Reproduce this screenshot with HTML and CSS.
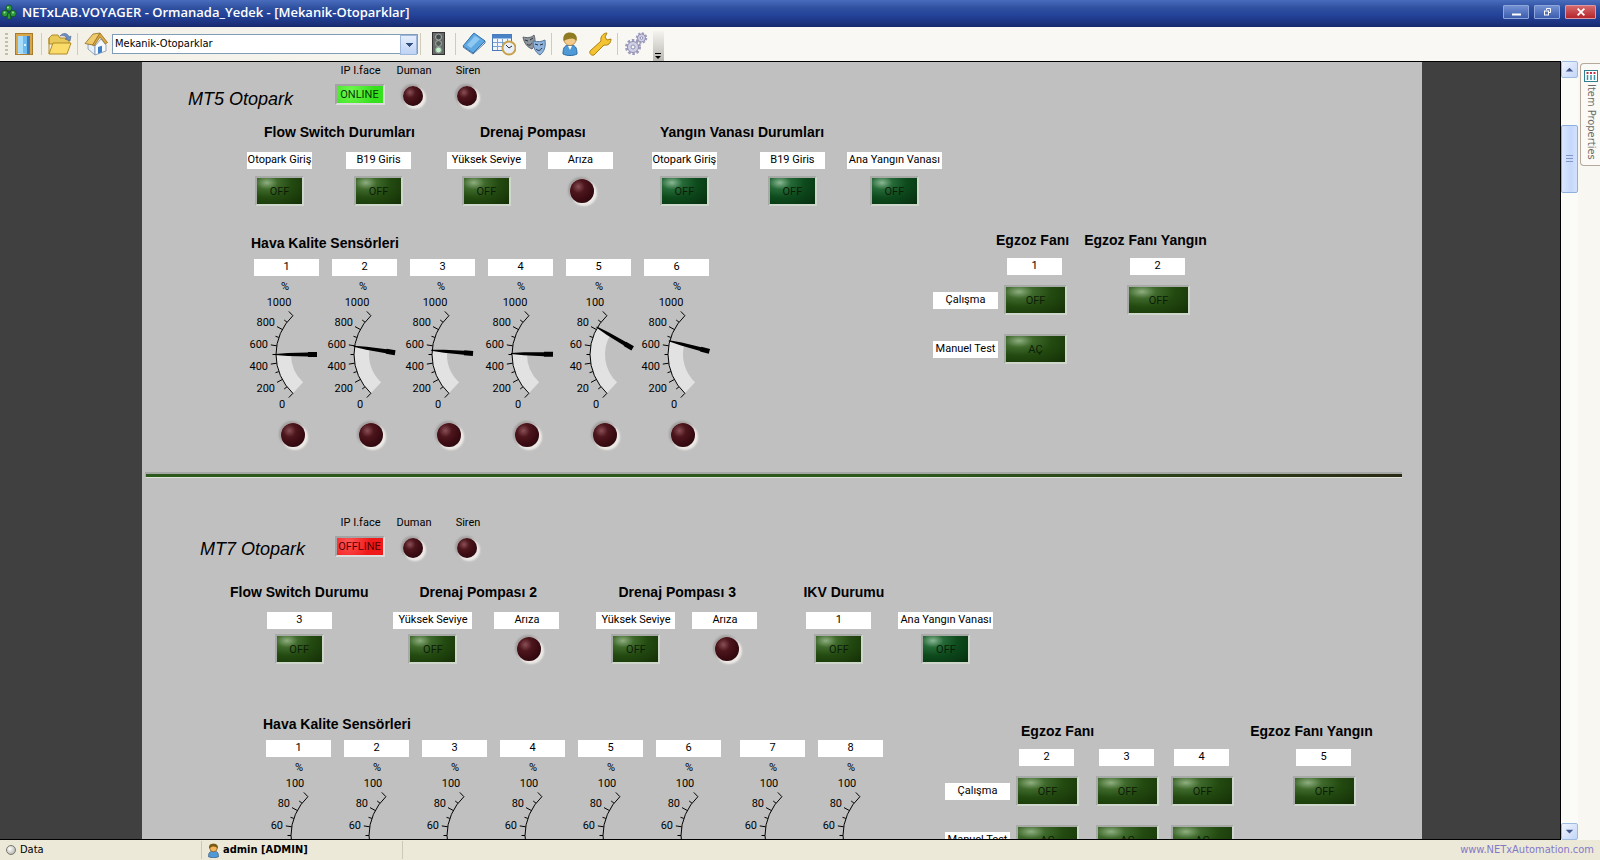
FILE: index.html
```
<!DOCTYPE html>
<html lang="tr">
<head>
<meta charset="utf-8">
<title>NETxLAB.VOYAGER - Ormanada_Yedek - [Mekanik-Otoparklar]</title>
<link rel="stylesheet" href="styles.css">
</head>
<body>
<svg class="defs" aria-hidden="true">
  <symbol id="dial" viewBox="0 0 65 136" overflow="visible">
    <path class="dial-line" d="M38.9 39.7A53 53 0 0 0 38.9 117.3M38.9 39.7L34.8 35.4M33 46.2L30.2 44M28.3 53.5L23 50.6M24.8 61.4L21.5 60.3M22.7 69.8L16.8 68.9M22 78.5H18.5M22.7 87.2L16.8 88.1M24.8 95.6L21.5 96.7M28.3 103.5L23 106.4M33 110.8L30.2 113M38.9 117.3L34.8 121.6"/>
  </symbol>
  <symbol id="needle" viewBox="0 0 65 136" overflow="visible">
    <path d="M21 78L34 77L54 76.5V76H63V81H54V80.5L34 80L21 79Z"/>
  </symbol>
</svg>

<header class="titlebar">
  <svg class="app-icon" viewBox="0 0 16 16"><g fill="#2f9a3c" stroke="#0b4a1a" stroke-width=".7"><circle cx="8" cy="4" r="3"/><circle cx="4" cy="9.500" r="3.200"/><circle cx="12" cy="9.500" r="3.200"/><path d="M7 9h2l1 6H6z"/></g><circle cx="7" cy="3.500" r="1" fill="#9be59b"/><circle cx="3.500" cy="8.500" r="1" fill="#9be59b"/><circle cx="12" cy="8.500" r="1" fill="#9be59b"/></svg>
  <h1 class="title">NETxLAB.VOYAGER - Ormanada_Yedek - [Mekanik-Otoparklar]</h1>
  <div class="window-buttons">
    <button class="winbtn" aria-label="Minimize"><svg viewBox="0 0 24 12"><path d="M8 8.500h9" stroke="#fff" stroke-width="2"/></svg></button>
    <button class="winbtn" aria-label="Restore"><svg viewBox="0 0 24 12"><path d="M11.500 4V2.500h4v4H14" fill="none" stroke="#fff"/><rect x="9.500" y="5" width="4" height="4" fill="none" stroke="#fff"/></svg></button>
    <button class="winbtn close" aria-label="Close"><svg viewBox="0 0 30 12"><path d="M12 2.500l7 7M19 2.500l-7 7" stroke="#fff" stroke-width="1.800"/></svg></button>
  </div>
</header>

<nav class="toolbar" aria-label="Toolbar">
  <span class="grip"></span>
  <button class="tool" aria-label="Exit"><svg viewBox="0 0 24 24"><rect x="3.500" y="1.500" width="17" height="21" fill="#d9a64a" stroke="#a87a2c"/><rect x="6" y="4" width="12" height="18" fill="#e9f6ff"/><path d="M6 4h9v18l-9-1z" fill="#6cbcf0"/><path d="M6 4h5v17l-5-.5z" fill="#a9dcfa"/><path d="M15 4h3v18h-3z" fill="#3a78c0"/><circle cx="13" cy="13" r="1" fill="#fff"/></svg></button>
  <span class="sep"></span>
  <button class="tool" aria-label="Open"><svg viewBox="0 0 24 24"><path d="M1 6l3-3h6l2 3h9v6H1z" fill="#e8c95a" stroke="#b08b28"/><path d="M1 6v16" stroke="#b08b28"/><path d="M1 22l4-11h18l-4 11z" fill="#fbdc6a" stroke="#b08b28"/><path d="M12 4c3-4 8-3 9 1l2-1-1 5-5-2 2-1c-1-2-4-3-7-2z" fill="#6d8fc0" stroke="#4a6592" stroke-width=".6"/></svg></button>
  <span class="sep"></span>
  <button class="tool home" aria-label="Home"><svg viewBox="0 0 24 24"><path d="M4 12l7 10V9z" fill="#dfeaf6" stroke="#7d93ad" stroke-width=".8"/><path d="M4 12v5l7 6V13z" fill="#e6effa" stroke="#7d93ad" stroke-width=".8"/><path d="M11 14l6-7 5 6v6l-11 4z" fill="#f6faff" stroke="#7d93ad" stroke-width=".8"/><path d="M14 15l4-1.300v6.500l-4 1.500z" fill="#3d7fc4"/><path d="M1 11.500L9 2l7-1-7 12z" fill="#efcb6c" stroke="#946f24" stroke-width=".8"/><path d="M16 1l7.500 9.500-2 1.500-5.500-7-6 9-1.500-1z" fill="#dba844" stroke="#946f24" stroke-width=".8"/></svg></button>
  <label class="combo"><select aria-label="Page"><option>Mekanik-Otoparklar</option></select></label>
  <span class="sep tight"></span>
  <button class="tool" aria-label="Status"><svg viewBox="0 0 24 24"><rect x="6.500" y=".5" width="12" height="22" fill="#666a68" stroke="#333"/><circle cx="12.500" cy="5" r="3" fill="#434b48" stroke="#a9b0ac"/><circle cx="12.500" cy="11.500" r="3" fill="#535b57" stroke="#a9b0ac"/><circle cx="12.500" cy="18" r="3" fill="#bff0c8" stroke="#8b938f"/></svg></button>
  <span class="sep"></span>
  <button class="tool" aria-label="Book"><svg viewBox="0 0 24 24"><path d="M1 15l10 7 12-11v-2L11 2z" fill="#e8eef5" stroke="#4c79a8"/><path d="M1 14L12 1l11 8-12 12z" fill="#5fa9e2" stroke="#3a74ad"/><path d="M5 13l8-9 5 3-9 9z" fill="#8fc8f1"/></svg></button>
  <button class="tool gap" aria-label="Calendar"><svg viewBox="0 0 24 24"><rect x=".5" y="2.500" width="19" height="16" fill="#f2f7fd" stroke="#4a78b8"/><path d="M.5 2.500h19v4H.5z" fill="#4a82c8"/><path d="M1 10.500h18M1 14.500h18M5.500 7v11M10.500 7v11M15.500 7v11" stroke="#7ba2d2"/><circle cx="17" cy="16" r="6.500" fill="#e8eefb" stroke="#c7a24a" stroke-width="2"/><path d="M14 13l3 3 3-2" fill="none" stroke="#333"/></svg></button>
  <button class="tool gap" aria-label="Scenes"><svg viewBox="0 0 24 24"><path d="M1 5c4 1 8 1 11-2 2 6 1 11-2 14-5-2-8-6-9-12z" fill="#8d949c" stroke="#5f666e"/><path d="M3 8l3 1M8 8l3-2M5 12c2 2 4 1 5-1" stroke="#2f353b" fill="none"/><path d="M11 9c5 1 8 1 12-1 1 7-1 12-5 15-5-3-7-8-7-14z" fill="#8fb3dc" stroke="#54779f"/><path d="M13 12l3 1M18 13l3-1M14 17c2 2 4 2 6-1" stroke="#234" fill="none"/></svg></button>
  <span class="sep"></span>
  <button class="tool" aria-label="User"><svg viewBox="0 0 24 24"><path d="M5 22c0-7 2-9 7-9s7 2 7 9c-4 2-10 2-14 0z" fill="#4e9ad6" stroke="#2b6ba5"/><path d="M10 14l2 4 2-4z" fill="#fff"/><circle cx="12" cy="7.500" r="6" fill="#f3c98c" stroke="#a9763a" stroke-width=".7"/><path d="M5.500 9c-1-6 2-8.500 6.500-8.500S20 3.500 18.500 9c-1-1-2-2-4-2.500-4 0-6 1-9 2.500z" fill="#8f7c22"/></svg></button>
  <button class="tool gap" aria-label="Settings"><svg viewBox="0 0 24 24"><path d="M2 19L13 9c-1-4 2-8 6-8l-2 4 2 3 4-1c0 4-3 7-7 6L6 23c-3 1-5-2-4-4z" fill="#f4c331" stroke="#ad8114"/></svg></button>
  <span class="sep"></span>
  <button class="tool" aria-label="Services"><svg viewBox="0 0 24 24"><circle cx="9" cy="15" r="6.500" fill="none" stroke="#9c9bbb" stroke-width="3" stroke-dasharray="2.400 1.700"/><circle cx="9" cy="15" r="5.500" fill="#cfcfe6" stroke="#9290b2"/><circle cx="9" cy="15" r="2" fill="#f7f6f1" stroke="#9290b2"/><circle cx="17.500" cy="6" r="4.500" fill="none" stroke="#9c9bbb" stroke-width="2.500" stroke-dasharray="2 1.500"/><circle cx="17.500" cy="6" r="4" fill="#cfcfe6" stroke="#9290b2"/><circle cx="17.500" cy="6" r="1.300" fill="#f7f6f1" stroke="#9290b2"/></svg></button>
  <button class="overflow" aria-label="More"><svg viewBox="0 0 10 10"><path d="M2 2.500h6" stroke="#000"/><path d="M2 5h6L5 8z"/></svg></button>
</nav>

<div class="workspace">
  <main class="canvas">
    <div class="sheet">

      <section class="area mt5">
        <header class="area-head">
          <h2 class="area-title">MT5 Otopark</h2>
          <div class="states">
            <span class="cap">IP I.face</span><span class="cap">Duman</span><span class="cap">Siren</span>
            <span class="state on">ONLINE</span><span class="led small"></span><span class="led small"></span>
          </div>
        </header>

        <div class="groups">
          <section class="group flow">
            <h3>Flow Switch Durumları</h3>
            <div class="fields">
              <div class="field"><span class="tag">Otopark Giriş</span><span class="lamp">OFF</span></div>
              <div class="field"><span class="tag">B19 Giris</span><span class="lamp">OFF</span></div>
            </div>
          </section>
          <section class="group drain">
            <h3>Drenaj Pompası</h3>
            <div class="fields">
              <div class="field"><span class="tag wide">Yüksek Seviye</span><span class="lamp">OFF</span></div>
              <div class="field"><span class="tag">Arıza</span><span class="led"></span></div>
            </div>
          </section>
          <section class="group valves">
            <h3>Yangın Vanası Durumları</h3>
            <div class="fields">
              <div class="field"><span class="tag">Otopark Giriş</span><span class="lamp cool">OFF</span></div>
              <div class="field second"><span class="tag">B19 Giris</span><span class="lamp cool">OFF</span></div>
              <div class="field"><span class="tag widest">Ana Yangın Vanası</span><span class="lamp cool">OFF</span></div>
            </div>
          </section>
        </div>

        <div class="lower">
          <section class="sensors">
            <h3>Hava Kalite Sensörleri</h3>
            <div class="gauges">
              <div class="sensor"><span class="tag">1</span>
                <svg class="gauge" viewBox="0 0 65 136"><path class="band" pathLength="94" stroke-dasharray="47 94" d="M44 111.800A45.500 45.500 0 0 1 44 45.200"/><use href="#dial"/><use href="#needle"/><text class="mid" x="31" y="14">%</text><text class="mid" x="25" y="30">1000</text><text x="21" y="50">800</text><text x="14" y="72">600</text><text x="14" y="94">400</text><text x="21" y="116">200</text><text class="mid" x="28" y="132">0</text></svg>
                <span class="led"></span></div>
              <div class="sensor"><span class="tag">2</span>
                <svg class="gauge" viewBox="0 0 65 136"><path class="band" pathLength="94" stroke-dasharray="55.700 94" d="M44 111.800A45.500 45.500 0 0 1 44 45.200"/><use href="#dial"/><use href="#needle" transform="rotate(8.700 75 78.500)"/><text class="mid" x="31" y="14">%</text><text class="mid" x="25" y="30">1000</text><text x="21" y="50">800</text><text x="14" y="72">600</text><text x="14" y="94">400</text><text x="21" y="116">200</text><text class="mid" x="28" y="132">0</text></svg>
                <span class="led"></span></div>
              <div class="sensor"><span class="tag">3</span>
                <svg class="gauge" viewBox="0 0 65 136"><path class="band" pathLength="94" stroke-dasharray="51.500 94" d="M44 111.800A45.500 45.500 0 0 1 44 45.200"/><use href="#dial"/><use href="#needle" transform="rotate(4.500 75 78.500)"/><text class="mid" x="31" y="14">%</text><text class="mid" x="25" y="30">1000</text><text x="21" y="50">800</text><text x="14" y="72">600</text><text x="14" y="94">400</text><text x="21" y="116">200</text><text class="mid" x="28" y="132">0</text></svg>
                <span class="led"></span></div>
              <div class="sensor"><span class="tag">4</span>
                <svg class="gauge" viewBox="0 0 65 136"><path class="band" pathLength="94" stroke-dasharray="48 94" d="M44 111.800A45.500 45.500 0 0 1 44 45.200"/><use href="#dial"/><use href="#needle" transform="rotate(1 75 78.500)"/><text class="mid" x="31" y="14">%</text><text class="mid" x="25" y="30">1000</text><text x="21" y="50">800</text><text x="14" y="72">600</text><text x="14" y="94">400</text><text x="21" y="116">200</text><text class="mid" x="28" y="132">0</text></svg>
                <span class="led"></span></div>
              <div class="sensor"><span class="tag">5</span>
                <svg class="gauge" viewBox="0 0 65 136"><path class="band" pathLength="94" stroke-dasharray="77.600 94" d="M44 111.800A45.500 45.500 0 0 1 44 45.200"/><use href="#dial"/><use href="#needle" transform="rotate(30.600 75 78.500)"/><text class="mid" x="31" y="14">%</text><text class="mid" x="27" y="30">100</text><text x="21" y="50">80</text><text x="14" y="72">60</text><text x="14" y="94">40</text><text x="21" y="116">20</text><text class="mid" x="28" y="132">0</text></svg>
                <span class="led"></span></div>
              <div class="sensor"><span class="tag">6</span>
                <svg class="gauge" viewBox="0 0 65 136"><path class="band" pathLength="94" stroke-dasharray="61.800 94" d="M44 111.800A45.500 45.500 0 0 1 44 45.200"/><use href="#dial"/><use href="#needle" transform="rotate(14.800 75 78.500)"/><text class="mid" x="31" y="14">%</text><text class="mid" x="25" y="30">1000</text><text x="21" y="50">800</text><text x="14" y="72">600</text><text x="14" y="94">400</text><text x="21" y="116">200</text><text class="mid" x="28" y="132">0</text></svg>
                <span class="led"></span></div>
            </div>
          </section>
          <section class="fans">
            <div class="fan-heads"><h3>Egzoz Fanı</h3><h3>Egzoz Fanı Yangın</h3></div>
            <div class="fan-grid">
              <span></span><span class="tag short">1</span><span class="tag short">2</span>
              <span class="tag">Çalışma</span><span class="lamp big">OFF</span><span class="lamp big">OFF</span>
              <span class="tag">Manuel Test</span><button class="lamp big">AÇ</button><span></span>
            </div>
          </section>
        </div>
      </section>

      <hr class="divider">

      <section class="area mt7">
        <header class="area-head">
          <h2 class="area-title">MT7 Otopark</h2>
          <div class="states">
            <span class="cap">IP I.face</span><span class="cap">Duman</span><span class="cap">Siren</span>
            <span class="state off">OFFLINE</span><span class="led small"></span><span class="led small"></span>
          </div>
        </header>

        <div class="groups">
          <section class="group flow">
            <h3>Flow Switch Durumu</h3>
            <div class="fields">
              <div class="field"><span class="tag">3</span><span class="lamp">OFF</span></div>
            </div>
          </section>
          <section class="group drain">
            <h3>Drenaj Pompası 2</h3>
            <div class="fields">
              <div class="field"><span class="tag wide">Yüksek Seviye</span><span class="lamp">OFF</span></div>
              <div class="field"><span class="tag">Arıza</span><span class="led"></span></div>
            </div>
          </section>
          <section class="group drain-b">
            <h3>Drenaj Pompası 3</h3>
            <div class="fields">
              <div class="field"><span class="tag wide">Yüksek Seviye</span><span class="lamp">OFF</span></div>
              <div class="field"><span class="tag">Arıza</span><span class="led"></span></div>
            </div>
          </section>
          <section class="group ikv">
            <h3>IKV Durumu</h3>
            <div class="fields">
              <div class="field"><span class="tag">1</span><span class="lamp">OFF</span></div>
              <div class="field"><span class="tag widest">Ana Yangın Vanası</span><span class="lamp cool">OFF</span></div>
            </div>
          </section>
        </div>

        <div class="lower">
          <section class="sensors">
            <h3>Hava Kalite Sensörleri</h3>
            <div class="gauges">
              <div class="sensor"><span class="tag">1</span><svg class="gauge" viewBox="0 0 65 136"><use href="#dial"/><text class="mid" x="30" y="14">%</text><text class="mid" x="26" y="30">100</text><text x="21" y="50">80</text><text x="14" y="72">60</text></svg></div>
              <div class="sensor"><span class="tag">2</span><svg class="gauge" viewBox="0 0 65 136"><use href="#dial"/><text class="mid" x="30" y="14">%</text><text class="mid" x="26" y="30">100</text><text x="21" y="50">80</text><text x="14" y="72">60</text></svg></div>
              <div class="sensor"><span class="tag">3</span><svg class="gauge" viewBox="0 0 65 136"><use href="#dial"/><text class="mid" x="30" y="14">%</text><text class="mid" x="26" y="30">100</text><text x="21" y="50">80</text><text x="14" y="72">60</text></svg></div>
              <div class="sensor"><span class="tag">4</span><svg class="gauge" viewBox="0 0 65 136"><use href="#dial"/><text class="mid" x="30" y="14">%</text><text class="mid" x="26" y="30">100</text><text x="21" y="50">80</text><text x="14" y="72">60</text></svg></div>
              <div class="sensor"><span class="tag">5</span><svg class="gauge" viewBox="0 0 65 136"><use href="#dial"/><text class="mid" x="30" y="14">%</text><text class="mid" x="26" y="30">100</text><text x="21" y="50">80</text><text x="14" y="72">60</text></svg></div>
              <div class="sensor spaced"><span class="tag">6</span><svg class="gauge" viewBox="0 0 65 136"><use href="#dial"/><text class="mid" x="30" y="14">%</text><text class="mid" x="26" y="30">100</text><text x="21" y="50">80</text><text x="14" y="72">60</text></svg></div>
              <div class="sensor"><span class="tag">7</span><svg class="gauge" viewBox="0 0 65 136"><use href="#dial"/><text class="mid" x="30" y="14">%</text><text class="mid" x="26" y="30">100</text><text x="21" y="50">80</text><text x="14" y="72">60</text></svg></div>
              <div class="sensor"><span class="tag">8</span><svg class="gauge" viewBox="0 0 65 136"><use href="#dial"/><text class="mid" x="30" y="14">%</text><text class="mid" x="26" y="30">100</text><text x="21" y="50">80</text><text x="14" y="72">60</text></svg></div>
            </div>
          </section>
          <section class="fans">
            <div class="fan-heads"><h3>Egzoz Fanı</h3><h3>Egzoz Fanı Yangın</h3></div>
            <div class="fan-grid">
              <span></span><span class="tag short">2</span><span class="tag short">3</span><span class="tag short">4</span><span class="tag short">5</span>
              <span class="tag">Çalışma</span><span class="lamp big">OFF</span><span class="lamp big">OFF</span><span class="lamp big">OFF</span><span class="lamp big">OFF</span>
              <span class="tag">Manuel Test</span><button class="lamp big">AÇ</button><button class="lamp big">AÇ</button><button class="lamp big">AÇ</button><span></span>
            </div>
          </section>
        </div>
      </section>
    </div>
  </main>

  <div class="scrollbar">
    <button class="scroll-btn" aria-label="Scroll up"><svg viewBox="0 0 16 16"><path d="M4 10l4-4 4 4z" fill="#44568c"/></svg></button>
    <div class="track"><div class="thumb"><svg viewBox="0 0 8 8"><path d="M0 .5h7M0 3.500h7M0 6.500h7" stroke="#7f97c8"/></svg></div></div>
    <button class="scroll-btn" aria-label="Scroll down"><svg viewBox="0 0 16 16"><path d="M4 6l4 4 4-4z" fill="#44568c"/></svg></button>
  </div>

  <aside class="dock">
    <button class="dock-tab">
      <svg viewBox="0 0 14 12"><rect x=".5" y=".5" width="13" height="11" fill="#fff" stroke="#2f7f92"/><path d="M3.500 2v2M7 2v2M10.500 2v2" stroke="#c03048" stroke-width="2"/><path d="M3.500 5v5M7 5v5M10.500 5v5" stroke="#3d93a5" stroke-width="1.500"/></svg>
      <span>Item Properties</span>
    </button>
  </aside>
</div>

<footer class="statusbar">
  <div class="cell data"><span class="dot"></span>Data</div>
  <div class="cell user"><svg viewBox="0 0 24 24"><path d="M4 22c0-7 2-9 8-9s8 2 8 9c-4 2-12 2-16 0z" fill="#4e9ad6" stroke="#2b4b75"/><circle cx="12" cy="8" r="6" fill="#f3b45c" stroke="#6b4a1a"/><path d="M5 9c-1-6 2-8 7-8s8 3 7 8c-3-4-9-5-14 0z" fill="#7a5a12"/></svg>admin [ADMIN]</div>
  <a class="site" href="#">www.NETxAutomation.com</a>
</footer>
</body>
</html>
```
FILE: styles.css
```
* { box-sizing: border-box; }

body {
  margin: 0;
  height: 100vh;
  display: flex;
  flex-direction: column;
  overflow: hidden;
  background: #f8f7f2;
  color: #000;
  font: 11px/16px "DejaVu Sans Condensed", "Noto Sans", sans-serif;
}

h1, h2, h3 { margin: 0; }
button { margin: 0; padding: 0; border: 0; background: none; font: inherit; color: inherit; }
.defs { position: absolute; width: 0; height: 0; }

/* Title bar */
.titlebar {
  flex: none;
  height: 27px;
  display: flex;
  align-items: center;
  padding: 0 4px 4px 1px;
  background: linear-gradient(#4a6cbc, #2e509f 30%, #24439a 55%, #1b2f78 92%, #16276a);
}
.app-icon { width: 16px; height: 16px; margin-right: 5px; }
.title { flex: 1; color: #fff; font: 600 13px/20px "Open Sans", "Noto Sans", sans-serif; }
.window-buttons { display: flex; gap: 5px; }
.winbtn {
  width: 26px;
  height: 14px;
  border: 1px solid #8ea6dc;
  border-radius: 1px;
  background: linear-gradient(#7390d2, #3c5dae);
}
.winbtn svg { display: block; width: 100%; height: 12px; }
.winbtn.close { width: 31px; background: linear-gradient(#d4696c, #b6262c); border-color: #d99aa6; }

/* Toolbar */
.toolbar {
  flex: none;
  height: 34px;
  display: flex;
  align-items: center;
  padding-left: 5px;
  background: linear-gradient(90deg, #f2f0e6, #f9f8f4 700px);
}
.grip { width: 3px; height: 22px; margin-right: 4px; background: repeating-linear-gradient(#c2beae 0 2px, transparent 2px 4px); }
.tool { width: 24px; height: 24px; }
.tool svg { display: block; width: 24px; height: 24px; }
.tool.gap { margin-left: 6px; }
.sep { width: 1px; height: 22px; margin: 0 6px 0 5px; background: #cfccbe; }
.sep.tight { margin: 0 5px 0 2px; }
.combo { position: relative; width: 306px; margin-left: 4px; }
.combo select {
  display: block;
  width: 100%;
  height: 20px;
  padding: 0 20px 0 2px;
  appearance: none;
  border: 1px solid #7f9db9;
  border-radius: 0;
  background: #fff;
  color: #000;
  font: inherit;
}
.combo::after {
  content: "";
  position: absolute;
  top: 1px;
  right: 1px;
  width: 15px;
  height: 18px;
  border: 1px solid #9db7dd;
  background: conic-gradient(from -45deg at 50% 100%, #34507f 90deg, transparent 0) center / 8px 4px no-repeat, linear-gradient(#e4edfc, #bfd2f4);
  pointer-events: none;
}
.overflow {
  align-self: flex-end;
  width: 11px;
  height: 30px;
  margin-left: 5px;
  display: flex;
  align-items: flex-end;
  background: linear-gradient(#f4f3ee, #b9b8b2);
}
.overflow svg { width: 10px; height: 10px; }

/* Work area */
.workspace { flex: 1; min-height: 0; display: flex; }
.canvas {
  flex: 1;
  min-width: 0;
  overflow: hidden;
  padding: 0 138px 0 142px;
  border: solid #000;
  border-width: 1px 1px 1px 0;
  background: #404040;
}
.sheet {
  min-height: 100%;
  background: #c0c0c0;
  font: 11px/16px Roboto, "Liberation Sans", sans-serif;
}
h3 { font: bold 14px/18px "Liberation Sans", Arial, sans-serif; white-space: nowrap; }

.area-head { display: flex; height: 46px; }
.area-title {
  flex: none;
  width: 191px;
  align-self: flex-end;
  font: italic 18px/22px "Liberation Sans", Arial, sans-serif;
  white-space: nowrap;
}
.mt5 .area-title { padding-left: 46px; line-height: 18px; }
.mt7 .area-title { padding-left: 58px; }
.states {
  display: grid;
  grid-template-columns: 53px 54px 54px;
  grid-template-rows: 17px 24px;
  row-gap: 5px;
  align-items: center;
  justify-items: center;
}
.cap { white-space: nowrap; padding-left: 2px; line-height: 17px; }
.state {
  align-self: start;
  width: 50px;
  height: 21px;
  border: 2px solid;
  border-color: #a4a4a4 #dcdcdc #dcdcdc #a4a4a4;
  line-height: 17px;
  text-align: center;
}
.state.on { background: radial-gradient(circle at 30% 30%, #70f850, #35e01c 70%); color: #063a00; }
.state.off { background: radial-gradient(circle at 25% 25%, #ff5555, #f01818 60%); color: #500; }

.led {
  width: 24px;
  height: 24px;
  border-radius: 50%;
  background: radial-gradient(circle at 35% 32%, #8a5058, #4e161d 28%, #3a0b12 60%, #1e0508);
  box-shadow: 2px 2px 2px 1px #ece9e6, -1px -1px 2px 1px #a39f9f;
}
.led.small { width: 20px; height: 20px; }

.tag {
  display: block;
  width: 65px;
  height: 17px;
  background: #fff;
  line-height: 15px;
  text-align: center;
  white-space: nowrap;
}
.tag.wide { width: 79px; }
.tag.widest { width: 95px; }
.tag.short { width: 55px; }

.lamp {
  display: block;
  width: 49px;
  height: 30px;
  border: 2px solid;
  border-color: #a8aaa8 #cfd6cc #cfd6cc #a8aaa8;
  background: radial-gradient(ellipse at 22% 18%, #8fae80 0, #3f6a2c 22%, #234a10 50%, #142f06 100%);
  color: #0c1c06;
  line-height: 27px;
  text-align: center;
}
.lamp.cool { background: radial-gradient(ellipse at 22% 18%, #8ab894 0, #266a38 22%, #0d4a1c 50%, #062e0e 100%); }
.lamp.big { width: 63px; }

.groups { display: flex; }
.fields { display: flex; margin-top: 11px; }
.field { display: flex; flex-direction: column; align-items: center; row-gap: 7px; }
.field .led { margin: 3px 0 0 4px; }
.lower { display: flex; align-items: flex-start; }
.gauges { display: flex; margin-top: 7px; }
.sensor { width: 78px; }
.sensor .led { display: block; margin: 11px auto 0; }
.gauge { display: block; width: 65px; height: 136px; overflow: visible; }
.gauge text { text-anchor: end; }
.gauge .mid { text-anchor: middle; }
.band { fill: none; stroke: #e2e2e2; stroke-width: 15px; }
.dial-line { fill: none; stroke: #000; stroke-width: 1px; }
.fan-heads { display: flex; }
.fan-grid { display: grid; grid-template-rows: 17px 50px 48px; align-items: center; margin-top: 9px; }
.fan-grid .tag.short { margin-left: 3px; }

/* MT5 */
.mt5 .groups { margin-top: 15px; padding-left: 105px; }
.mt5 .flow h3 { padding-left: 17px; }
.mt5 .flow .fields { column-gap: 34px; }
.mt5 .drain { margin-left: 32px; }
.mt5 .drain h3 { padding-left: 33px; }
.drain .fields { column-gap: 22px; }
.valves { margin-left: 39px; }
.valves h3 { padding-left: 8px; }
.valves .fields { column-gap: 22px; }
.valves .second { margin-left: 21px; }
.mt5 .lower { margin-top: 28px; padding-left: 112px; }
.mt5 .sensors h3 { margin-left: -3px; }
.mt5 .sensor:nth-child(n+4) .gauge { margin-left: 2px; }
.mt5 .fans { margin: -3px 0 0 211px; }
.mt5 .fan-heads { column-gap: 15px; padding-left: 63px; }
.mt5 .fan-grid { grid-template-columns: 71px 123px 63px; }

.divider {
  height: 6px;
  margin: 25px 20px 0 3px;
  border: solid;
  border-width: 2px 0 1px 1px;
  border-color: #a6a8a6 #c0c0c0 #dfe4da #a6a8a6;
  background: linear-gradient(90deg, #2c5a1c, #2c5a1c 60%, #2a2a14);
}

/* MT7 */
.mt7 { padding-top: 36px; }
.mt7 .groups { margin-top: 23px; padding-left: 88px; }
.mt7 .field { row-gap: 5px; }
.mt7 .flow .fields { justify-content: center; }
.mt7 .drain { margin-left: 25px; }
.mt7 .drain h3 { padding-left: 26px; }
.drain-b { margin-left: 37px; }
.drain-b h3 { padding-left: 22px; }
.drain-b .fields { column-gap: 17px; }
.ikv { margin-left: 46px; }
.ikv .fields { column-gap: 27px; padding-left: 3px; }
.mt7 .lower { margin-top: 51px; padding-left: 124px; }
.mt7 .sensors h3 { margin-left: -3px; }
.mt7 .gauge { margin-left: 3px; }
.mt7 .sensor.spaced { width: 84px; }
.mt7 .fans { margin: 7px 0 0 49px; }
.mt7 .fan-heads { padding-left: 76px; column-gap: 156px; }
.mt7 .fan-grid { grid-template-columns: 71px 80px 75px 122px 63px; }

/* Scroll bar */
.scrollbar { flex: none; width: 17px; display: flex; flex-direction: column; background: #fbfbf8; }
.scroll-btn { width: 17px; height: 17px; border: 1px solid #9fbbe0; border-radius: 2px; background: linear-gradient(135deg, #f0f5ff, #c3d5f7); }
.scroll-btn svg { display: block; width: 15px; height: 15px; }
.track { flex: 1; padding-top: 47px; }
.thumb {
  height: 68px;
  display: flex;
  align-items: center;
  justify-content: center;
  border: 1px solid #8fb0dc;
  border-radius: 2px;
  background: linear-gradient(90deg, #d9e6ff, #c6d8fb 60%, #d3e1fd);
}
.thumb svg { width: 8px; height: 8px; }

/* Docked panel tab */
.dock { flex: none; width: 22px; padding: 2px 0 0 2px; }
.dock-tab {
  width: 20px;
  height: 103px;
  display: flex;
  flex-direction: column;
  align-items: center;
  row-gap: 2px;
  padding-top: 6px;
  border: 1px solid #b5a89c;
  border-right: 0;
  border-radius: 4px 0 0 4px;
  background: #fbfaf7;
  color: #6a6a66;
}
.dock-tab svg { flex: none; width: 14px; height: 12px; }
.dock-tab span { writing-mode: vertical-rl; white-space: nowrap; line-height: 16px; }

/* Status bar */
.statusbar { flex: none; height: 20px; display: flex; align-items: center; background: #ece9d8; }
.cell { display: flex; align-items: center; height: 18px; border-right: 1px solid #cdc9b6; }
.data { width: 202px; padding-left: 6px; column-gap: 4px; }
.dot { width: 10px; height: 10px; border-radius: 50%; border: 1px solid #77776f; background: radial-gradient(circle at 35% 35%, #fff, #a5a59c); }
.user { width: 201px; padding-left: 4px; column-gap: 2px; font-weight: bold; }
.user svg { width: 15px; height: 15px; }
.site { margin-left: auto; padding-right: 6px; color: #8378c8; text-decoration: none; }
```
